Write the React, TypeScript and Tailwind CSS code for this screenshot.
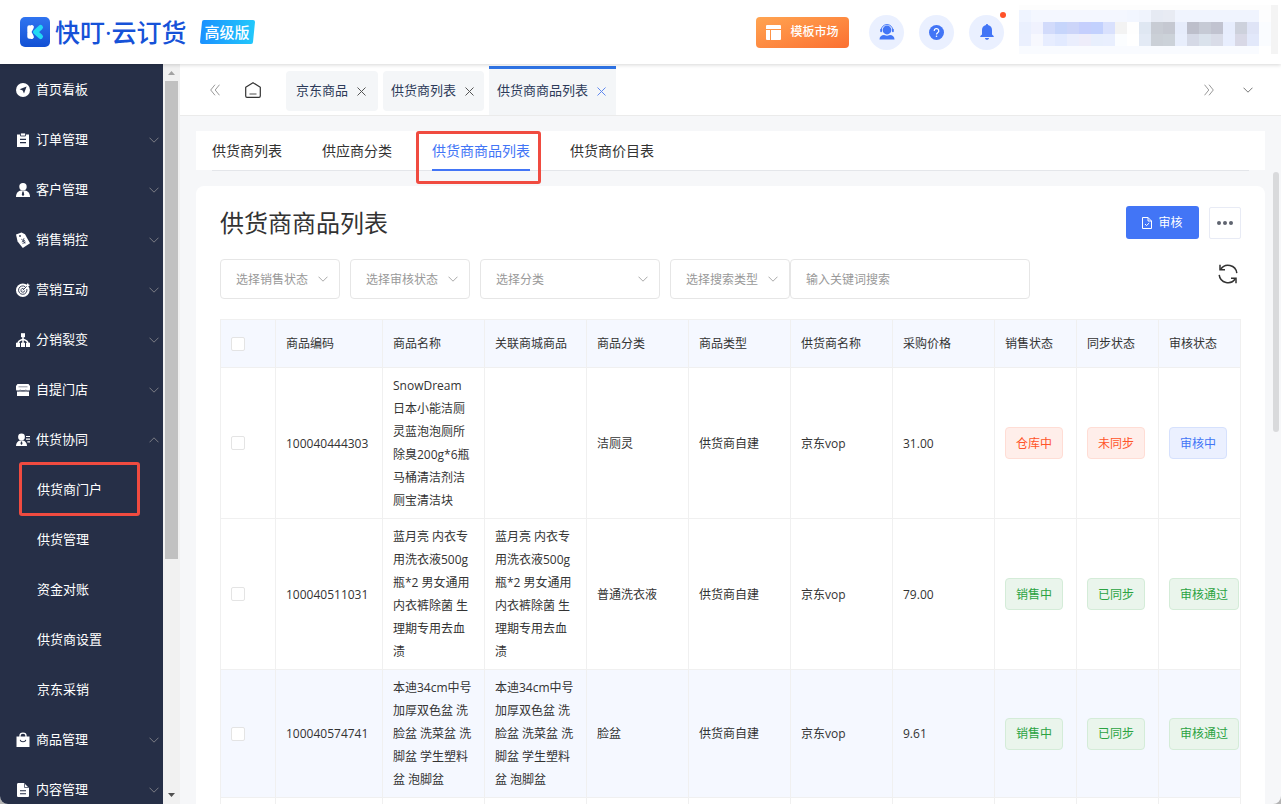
import type { ReactNode } from "react";

const DARK = "#262f47";

const navIcons: Record<string, ReactNode> = {
  home: (
    <>
      <circle cx="7" cy="7" r="7" fill="#fff" />
      <path d="M10.6 3.4 8 10.4 6.7 7.5 3.6 6.3z" fill={DARK} />
    </>
  ),
  order: (
    <>
      <path d="M1 1.5h12V14H1z" fill="#fff" />
      <path d="M4.5 0h5v3h-5z" fill="#fff" stroke={DARK} strokeWidth="0.8" />
      <path d="M4 6.3h6M4 9.7h6" stroke={DARK} strokeWidth="1.2" />
    </>
  ),
  customer: (
    <>
      <circle cx="7" cy="3.7" r="3.7" fill="#fff" />
      <path d="M0 14c0-4 2.4-6 5-6.4h4c2.6.4 5 2.4 5 6.4z" fill="#fff" />
      <path d="M6.4 8.6h1.2l.6 3.2L7 13.2l-1.2-1.4z" fill={DARK} />
    </>
  ),
  sale: (
    <>
      <path d="M0 1.6 5.5-.4 9 1.2 14 10.2 6.8 15 1.6 8.5z" fill="#fff" />
      <circle cx="4" cy="3" r="0.9" fill={DARK} />
      <path d="M5.3 6.2 7.3 7.6 8 5.2M7.3 7.6 9 10.6M5.8 9l3.2-1.6M6.5 10.6l3.2-1.7" stroke={DARK} strokeWidth="0.8" fill="none" />
    </>
  ),
  marketing: (
    <>
      <circle cx="6.8" cy="7.2" r="6.8" fill="#fff" />
      <path d="M9.2 3.7A4.2 4.2 0 1 0 10.8 6" stroke={DARK} strokeWidth="0.9" fill="none" />
      <path d="M7.6 5.6A1.9 1.9 0 1 0 8.7 7.4" stroke={DARK} strokeWidth="0.8" fill="none" />
      <path d="M6.8 7.2 11 3" stroke={DARK} strokeWidth="0.9" />
      <path d="M10.4 3.6V1.7L12 0l.5 1.5L14 2l-1.7 1.6z" fill="#fff" />
    </>
  ),
  share: (
    <>
      <path d="M5 .2h4v4H5z" fill="#fff" />
      <path d="M7 4v6M2 10.5c0-2.5 2.3-3.5 5-4.3 2.7.8 5 1.8 5 4.3" stroke="#fff" strokeWidth="1.5" fill="none" />
      <path d="M0 9.7h4V14H0zM5 9.7h4V14H5zM10 9.7h4V14h-4z" fill="#fff" />
    </>
  ),
  store: (
    <>
      <path d="M1.5 1h11L14 3v3.5c0 1-1 1.5-2 1.2L7 7.5l-5 .2c-1 .3-2-.2-2-1.2V3z" fill="#fff" />
      <path d="M1 8.5h12V13H1z" fill="#fff" />
      <path d="M2.5 3.8h9" stroke={DARK} strokeWidth="0.5" />
      <path d="M.5 7.3c1.500 1.200 3 .3 3.500-.4 1 1.200 5 1.200 6 0 .5.700 2 1.600 3.500.4" stroke={DARK} strokeWidth="0.6" fill="none" />
    </>
  ),
  supply: (
    <>
      <circle cx="5.5" cy="4" r="3.4" fill="#fff" />
      <path d="M0 13c0-3.5 2-5 4-5.5h3c2 .5 4 2 4 5.5z" fill="#fff" />
      <path d="M5 8.4h1l.5 2.4-1 1.2-1-1.2z" fill={DARK} />
      <path d="M10 3.5h4M10 6.2h4M11.3 8.9H14" stroke="#fff" strokeWidth="1.2" />
    </>
  ),
  goods: (
    <>
      <path d="M.5 3.5h13V14H.5z" fill="#fff" />
      <path d="M4 4V2.7a3 2.5 0 0 1 6 0V4" stroke="#fff" strokeWidth="1.3" fill="none" />
      <path d="M4.2 6.8c.6 2.600 5 2.600 5.600 0" stroke={DARK} strokeWidth="1.1" fill="none" />
    </>
  ),
  content: (
    <>
      <path d="M1 1.5C1 .5 1.5 0 2.5 0H8l5 5v7.5c0 1-.5 1.5-1.5 1.5h-9C1.5 14 1 13.5 1 12.5z" fill="#fff" />
      <path d="M8.5.5v4h4" stroke={DARK} strokeWidth="0.7" fill="none" />
      <path d="M4 7.7h6M4 10.7h6" stroke={DARK} strokeWidth="1.1" />
    </>
  ),
};

const nav = [
  { icon: "home", label: "首页看板", leaf: true },
  { icon: "order", label: "订单管理" },
  { icon: "customer", label: "客户管理" },
  { icon: "sale", label: "销售销控" },
  { icon: "marketing", label: "营销互动" },
  { icon: "share", label: "分销裂变" },
  { icon: "store", label: "自提门店" },
  {
    icon: "supply",
    label: "供货协同",
    children: ["供货商门户", "供货管理", "资金对账", "供货商设置", "京东采销"],
  },
  { icon: "goods", label: "商品管理" },
  { icon: "content", label: "内容管理" },
];

const pageTabs = [
  { label: "京东商品" },
  { label: "供货商列表" },
  { label: "供货商商品列表", active: true },
];

const subTabs = ["供货商列表", "供应商分类", "供货商商品列表", "供货商价目表"];
const activeSubTab = "供货商商品列表";

const columns = [
  { title: "商品编码", width: "w-[107px]" },
  { title: "商品名称", width: "w-[102px]" },
  { title: "关联商城商品", width: "w-[102px]" },
  { title: "商品分类", width: "w-[102px]" },
  { title: "商品类型", width: "w-[102px]" },
  { title: "供货商名称", width: "w-[102px]" },
  { title: "采购价格", width: "w-[102px]" },
  { title: "销售状态", width: "w-[82px]" },
  { title: "同步状态", width: "w-[82px]" },
  { title: "审核状态", width: "w-[82px]" },
];

const rows = [
  {
    code: "100040444303",
    name: "SnowDream 日本小能洁厕灵蓝泡泡厕所除臭200g*6瓶马桶清洁剂洁厕宝清洁块",
    linked: "",
    category: "洁厕灵",
    type: "供货商自建",
    supplier: "京东vop",
    price: "31.00",
    tags: ["仓库中", "未同步", "审核中"],
  },
  {
    code: "100040511031",
    name: "蓝月亮 内衣专用洗衣液500g瓶*2 男女通用 内衣裤除菌 生理期专用去血渍",
    linked: "蓝月亮 内衣专用洗衣液500g瓶*2 男女通用 内衣裤除菌 生理期专用去血渍",
    category: "普通洗衣液",
    type: "供货商自建",
    supplier: "京东vop",
    price: "79.00",
    tags: ["销售中", "已同步", "审核通过"],
  },
  {
    code: "100040574741",
    name: "本迪34cm中号加厚双色盆 洗脸盆 洗菜盆 洗脚盆 学生塑料盆 泡脚盆",
    linked: "本迪34cm中号加厚双色盆 洗脸盆 洗菜盆 洗脚盆 学生塑料盆 泡脚盆",
    category: "脸盆",
    type: "供货商自建",
    supplier: "京东vop",
    price: "9.61",
    tags: ["销售中", "已同步", "审核通过"],
    hover: true,
  },
];

const tagColors: Record<string, string> = {
  仓库中: "bg-[#ffeeea] border-[#ffddd5] text-[#ff5429]",
  未同步: "bg-[#ffeeea] border-[#ffddd5] text-[#ff5429]",
  审核中: "bg-[#ebf0ff] border-[#d6e1fd] text-[#4275f6]",
  销售中: "bg-[#eaf5ec] border-[#d4ecd8] text-[#2ba342]",
  已同步: "bg-[#eaf5ec] border-[#d4ecd8] text-[#2ba342]",
  审核通过: "bg-[#eaf5ec] border-[#d4ecd8] text-[#2ba342]",
};

// blurred-out account block, one colour per 12px cell
const mosaic = [
  "eff4ff f4f7ff f4f7ff f4f7ff f4f7ff f4f7ff f4f7ff f4f7ff f4f7ff f2f6ff f0f4fd e6eaf3 e8ebf3 f0f4fe f0f4fe f0f4fe f0f4fe f0f4fe f0f4fe f0f4fe fdfdfe",
  "eaf0fe f0f2fe d2dbfb c6d5fb ccd5f9 c5cffd c2d1fe d9e1fd f3f3f3 fefefe dfe7f2 c8ccd4 c5c8d1 e6ecfb bdbfcb c6cad5 c1c3d0 e7edfd cdd1dc dfe4f6 fafcff",
  "ebf0fe f7f8fe e7edff e2eaff eaeefd eeedfa e8effd e9effe fbfdff ffffff e3eaf5 cbd0d7 ccd2d9 e8eefc d5d9e6 dae2ec d9dce8 e8eefe d8d8e6 e2e8fa fafcff",
].map((line) => line.split(" "));

function Chevron({ up = false, className = "" }: { up?: boolean; className?: string }) {
  return (
    <svg width="10" height="6" viewBox="0 0 10 6" fill="none" stroke="currentColor" className={className}>
      <path d={up ? "M.5 5.3 5 .8l4.5 4.5" : "M.5.7 5 5.2 9.5.7"} />
    </svg>
  );
}

function Select({ label, wide = false }: { label: string; wide?: boolean }) {
  return (
    <div className={`relative ${wide ? "w-[180px]" : "w-[120px]"}`}>
      <select
        aria-label={label}
        className="w-full h-10 appearance-none border border-[#e6e6e6] rounded bg-white pt-0.5 pl-[15px] pr-6 text-xs text-[#999] outline-none"
      >
        <option>{label}</option>
      </select>
      <Chevron className="absolute right-3 top-[17px] text-[#aaa] pointer-events-none" />
    </div>
  );
}

function Tag({ text }: { text: string }) {
  return (
    <span className={`inline-flex items-center h-8 px-[10px] border rounded whitespace-nowrap align-middle ${tagColors[text]}`}>
      {text}
    </span>
  );
}

function Checkbox({ label }: { label: string }) {
  return (
    <input
      type="checkbox"
      aria-label={label}
      className="block appearance-none size-[14px] border border-[#e4e4e4] rounded-xs bg-white"
    />
  );
}

function Header() {
  return (
    <header className="relative z-10 shrink-0 h-16 bg-white shadow-[0_1px_4px_rgba(0,0,0,0.16)] flex items-center justify-between pl-5 pr-[3px]">
      <div className="flex items-center">
        <svg width="30" height="30" viewBox="0 0 30 30">
          <defs>
            <linearGradient id="logoBg" x1="0" y1="0" x2="0" y2="1">
              <stop offset="0" stopColor="#2f74f0" />
              <stop offset="1" stopColor="#1250d4" />
            </linearGradient>
          </defs>
          <rect width="30" height="30" rx="5" fill="url(#logoBg)" />
          <path d="M9.3 10.2v9.6M9.3 15l2.6-5M9.3 15l2.6 5" stroke="#fff" strokeWidth="4" strokeLinecap="round" fill="none" />
          <path d="M20.5 10.5 15.5 15l5 4.5" stroke="#22d8f4" strokeWidth="5" strokeLinecap="round" strokeLinejoin="round" fill="none" />
        </svg>
        <span className="ml-[5px] text-[25px] leading-8 font-medium text-[#1652d8]">快叮·云订货</span>
        <span className="relative ml-[13px] h-6 w-[55px] flex items-center justify-center text-[15px] font-medium text-white">
          <svg width="55" height="24" viewBox="0 0 55 24" className="absolute inset-0">
            <defs>
              <linearGradient id="badgeBg" x1="0" y1="0" x2="1" y2="0">
                <stop offset="0" stopColor="#1a90ff" />
                <stop offset="1" stopColor="#22c8fb" />
              </linearGradient>
            </defs>
            <path d="M4 0h49q2 0 2 2l-2 20q0 2-2 2H2q-2 0-2-2L2 2q0-2 2-2z" fill="url(#badgeBg)" />
          </svg>
          <span className="relative">高级版</span>
        </span>
      </div>

      <div className="flex items-center self-stretch">
        <button className="h-[31px] w-[93px] rounded bg-linear-to-br from-[#ffa451] to-[#fb6f31] text-white text-xs font-medium flex items-center justify-center gap-[9px]">
          <svg width="15" height="15" viewBox="0 0 15 15" fill="#fff">
            <path d="M1 0h13q1 0 1 1v3H0V1q0-1 1-1zM0 5h4v10H1q-1 0-1-1zM5 5h10v9q0 1-1 1H5z" />
          </svg>
          模板市场
        </button>
        <button aria-label="客服" className="ml-5 size-[35px] rounded-full bg-[#eaf0ff] flex items-center justify-center">
          <svg width="16" height="16" viewBox="0 0 16 16" fill="#4275f6">
            <circle cx="8" cy="6" r="4.4" />
            <path d="M2.3 6a5.7 5.5 0 0 1 11.4 0" fill="none" stroke="#4275f6" strokeWidth="0.9" />
            <rect x="1.2" y="4.8" width="1.8" height="3.4" rx="0.9" />
            <rect x="13" y="4.8" width="1.8" height="3.4" rx="0.9" />
            <path d="M.5 15.5c0-3 2-4.3 4.5-4.5l3 .8 3-.8c2.5.2 4.5 1.5 4.5 4.5z" />
          </svg>
        </button>
        <button aria-label="帮助" className="ml-[15px] size-[35px] rounded-full bg-[#eaf0ff] flex items-center justify-center">
          <svg width="15" height="15" viewBox="0 0 15 15">
            <circle cx="7.5" cy="7.5" r="7.5" fill="#4275f6" />
            <path d="M5.2 6a2.3 2.2 0 1 1 3.5 1.7c-.9.6-1.2.9-1.2 1.8" fill="none" stroke="#fff" strokeWidth="1.2" />
            <circle cx="7.5" cy="11.3" r="0.8" fill="#fff" />
          </svg>
        </button>
        <button aria-label="消息" className="relative ml-[15px] size-[35px] rounded-full bg-[#eaf0ff] flex items-center justify-center">
          <svg width="14" height="16" viewBox="0 0 14 16" fill="#4275f6">
            <path d="M7 0c.7 0 1 .4 1 1 2.6.5 4 2.5 4 5v4.5l1.7 1.6V13H.3v-.9L2 10.5V6c0-2.5 1.4-4.5 4-5 0-.6.3-1 1-1zM5 14h4c0 1-.8 1.8-2 1.8S5 15 5 14z" />
          </svg>
          <span className="absolute -top-[3px] -right-[2px] size-[6px] rounded-full bg-[#ff5229]" />
        </button>
        <svg width="259" height="49" viewBox="0 0 259 49" shapeRendering="crispEdges" className="ml-[15px] mt-[5px] self-start">
          <rect width="252" height="5" fill="#fdfdfd" />
          {mosaic.map((line, y) =>
            line.map((color, x) => (
              <rect key={`${x}-${y}`} x={x * 12} y={5 + y * 12} width="12" height="12" fill={`#${color}`} />
            ))
          )}
          <rect y="41" width="240" height="8" fill="#f9fbff" />
          <rect x="252" width="7" height="49" fill="#f4f4f4" />
        </svg>
      </div>
    </header>
  );
}

function Sidebar() {
  return (
    <aside className="flex shrink-0">
      <nav className="w-[163px] bg-[#262f47] pt-px overflow-hidden text-[13px] text-white">
        {nav.map((item) => (
          <div key={item.label}>
            <a href="#" className="flex items-center h-[50px] pl-4 pr-1">
              <svg width="14" height="14" viewBox="0 0 14 14" className="overflow-visible">
                {navIcons[item.icon]}
              </svg>
              <span className="ml-[6px] flex-1">{item.label}</span>
              {!item.leaf && <Chevron up={!!item.children} className="text-[#7b7d85]" />}
            </a>
            {item.children?.map((child, i) => (
              <a key={child} href="#" className="relative flex items-center h-[50px] pl-[37px]">
                {child}
                {i === 0 && (
                  <span className="absolute left-[19px] -top-[3px] w-[121px] h-[54px] border-3 border-[#f04b40] rounded-[3px]" />
                )}
              </a>
            ))}
          </div>
        ))}
      </nav>
      <div className="w-[17px] bg-[#f1f1f1] flex flex-col items-center">
        <svg width="17" height="17" viewBox="0 0 17 17" className="shrink-0">
          <path d="M5 11 8.5 7 12 11z" fill="#a3a3a3" />
        </svg>
        <div className="w-[13px] mr-[1px] h-[478px] bg-[#c1c1c1]" />
        <svg width="17" height="17" viewBox="0 0 17 17" className="shrink-0 mt-auto">
          <path d="M5 6 8.5 10 12 6z" fill="#505050" />
        </svg>
      </div>
    </aside>
  );
}

function PageTabs() {
  return (
    <div className="shrink-0 h-[52px] bg-white border-b border-[#ebebeb] flex items-center pl-[30px] pr-7">
      <button aria-label="向左" className="text-[#999]">
        <svg width="10" height="12" viewBox="0 0 10 12" fill="none" stroke="currentColor">
          <path d="M5 .7.7 6 5 11.3M9.5.7 5.2 6l4.3 5.3" />
        </svg>
      </button>
      <button aria-label="首页" className="ml-[25px]">
        <svg width="16" height="16" viewBox="0 0 16 16" fill="none">
          <path d="M.7 5.3 8 .7l7.3 4.6V14q0 1.300-1.300 1.300H2Q.7 15.300.7 14z" stroke="#333" strokeWidth="1.2" strokeLinejoin="round" />
          <path d="M4.5 12h7" stroke="#888" strokeWidth="1.5" />
        </svg>
      </button>
      <div className="flex-1 self-stretch ml-[25px] flex items-end gap-[5px] text-[13px] text-[#2c3a59]">
        {pageTabs.map((tab) => (
          <div
            key={tab.label}
            className={`flex items-center justify-center gap-[9px] min-w-[92px] pl-2 pr-[10px] bg-[#f4f6f8] ${
              tab.active ? "h-[49px] border-t-3 border-[#2f74e6] pb-0.5" : "h-10 mb-1 rounded"
            }`}
          >
            <a href="#">{tab.label}</a>
            <button aria-label={`关闭${tab.label}`} className={tab.active ? "text-[#5f88f0]" : "text-[#555]"}>
              <svg width="9" height="9" viewBox="0 0 9 9" stroke="currentColor">
                <path d="M.5.5l8 8M8.5.5l-8 8" />
              </svg>
            </button>
          </div>
        ))}
      </div>
      <button aria-label="向右" className="text-[#999]">
        <svg width="10" height="12" viewBox="0 0 10 12" fill="none" stroke="currentColor">
          <path d="M.5.7 4.8 6 .5 11.3M5 .7 9.3 6 5 11.3" />
        </svg>
      </button>
      <button aria-label="更多标签" className="ml-[29px] text-[#777]">
        <Chevron />
      </button>
    </div>
  );
}

function ProductTable() {
  return (
    <table className="w-full mt-5 table-fixed border-separate border-spacing-0 border-t border-l border-[#f0f0f0] text-xs text-[#333] [&_td]:border-r [&_td]:border-b [&_td]:border-[#f0f0f0] [&_td]:px-[10px] [&_th]:border-r [&_th]:border-b [&_th]:border-[#f0f0f0] [&_th]:px-[10px]">
      <thead>
        <tr className="h-12 bg-[#f5f8ff] text-left">
          <th className="w-[55px]">
            <Checkbox label="全选" />
          </th>
          {columns.map((col) => (
            <th key={col.title} className={`font-normal ${col.width}`}>
              {col.title}
            </th>
          ))}
        </tr>
      </thead>
      <tbody className="leading-[23px]">
        {rows.map((row) => (
          <tr key={row.code} className={row.hover ? "bg-[#f5f8ff]" : "bg-white"}>
            <td>
              <Checkbox label={row.code} />
            </td>
            <td>{row.code}</td>
            <td className="py-[6px]">{row.name}</td>
            <td className="py-[6px]">{row.linked}</td>
            <td>{row.category}</td>
            <td>{row.type}</td>
            <td>{row.supplier}</td>
            <td>{row.price}</td>
            {row.tags.map((tag) => (
              <td key={tag}>
                <Tag text={tag} />
              </td>
            ))}
          </tr>
        ))}
        <tr className="h-32">
          <td />
          {columns.map((col) => (
            <td key={col.title} />
          ))}
        </tr>
      </tbody>
    </table>
  );
}

export default function App() {
  return (
    <div className="h-screen bg-[#b4b4b4] font-['Open_Sans','Noto_Sans_CJK_SC',sans-serif]">
      <div className="h-full flex flex-col overflow-hidden rounded-b-lg bg-[#f6f7f9]">
        <Header />
        <div className="flex-1 min-h-0 flex">
          <Sidebar />
          <main className="flex-1 min-w-0 flex flex-col">
            <PageTabs />
            <div className="relative flex-1 min-h-0 overflow-hidden px-4 pt-[15px]">
              <nav className="h-[39px] px-4 bg-white text-sm text-[#333]">
                <div className="h-10 border-b border-[#e4e6ea] flex gap-10">
                  {subTabs.map((tab) => (
                    <a
                      key={tab}
                      href="#"
                      className={`relative h-10 flex items-center ${
                        tab === activeSubTab ? "border-b-2 border-[#4275f6] text-[#4275f6] pt-0.5" : ""
                      }`}
                    >
                      {tab}
                      {tab === activeSubTab && (
                        <span className="absolute -left-4 top-0 w-[125px] h-[53px] border-3 border-[#f04b40] rounded-[3px]" />
                      )}
                    </a>
                  ))}
                </div>
              </nav>

              <section className="mt-4 bg-white rounded-lg px-6 pt-5">
                <div className="flex items-end justify-between">
                  <h1 className="text-2xl leading-[33px] text-[#333]">供货商商品列表</h1>
                  <div className="flex items-end gap-[10px]">
                    <button className="h-[33px] w-[73px] rounded-[3px] bg-[#4275f6] text-white text-xs flex items-center justify-center gap-[6px]">
                      <svg width="10" height="12" viewBox="0 0 10 12" fill="none" stroke="#fff">
                        <path d="M.5.5H6L9.5 4v7.5h-9zM6 .5V4h3.5M3 7l1.5 1.6L7.2 6" />
                      </svg>
                      审核
                    </button>
                    <button aria-label="更多" className="size-8 rounded-xs border border-[#e8ebf5] bg-white flex items-center justify-center">
                      <svg width="16" height="4" viewBox="0 0 16 4" fill="#5f6470">
                        <circle cx="2" cy="2" r="2" />
                        <circle cx="8" cy="2" r="2" />
                        <circle cx="14" cy="2" r="2" />
                      </svg>
                    </button>
                  </div>
                </div>

                <div className="mt-5 flex gap-[10px]">
                  <Select label="选择销售状态" />
                  <Select label="选择审核状态" />
                  <Select label="选择分类" wide />
                  <div className="flex">
                    <Select label="选择搜索类型" />
                    <input
                      type="text"
                      aria-label="关键词"
                      placeholder="输入关键词搜索"
                      className="w-[240px] h-10 border border-[#e6e6e6] rounded px-[15px] text-xs placeholder:text-[#999] outline-none"
                    />
                  </div>
                  <button aria-label="刷新" className="ml-auto w-[23px] h-[30px] flex items-center">
                    <svg width="20" height="20" viewBox="0 0 20 20" fill="none" stroke="#333" strokeWidth="1.5">
                      <path d="M2.6 5.5A8.8 8.8 0 0 1 18.8 9.2M17.4 14.5A8.8 8.8 0 0 1 1.2 10.8" />
                      <path d="M2 .8v5h5M18 19.2v-5h-5" />
                    </svg>
                  </button>
                </div>

                <ProductTable />
              </section>

              <div className="absolute right-[2px] top-14 w-[6px] h-[260px] rounded-full bg-[#d9dadc]" />
            </div>
          </main>
        </div>
      </div>
    </div>
  );
}
